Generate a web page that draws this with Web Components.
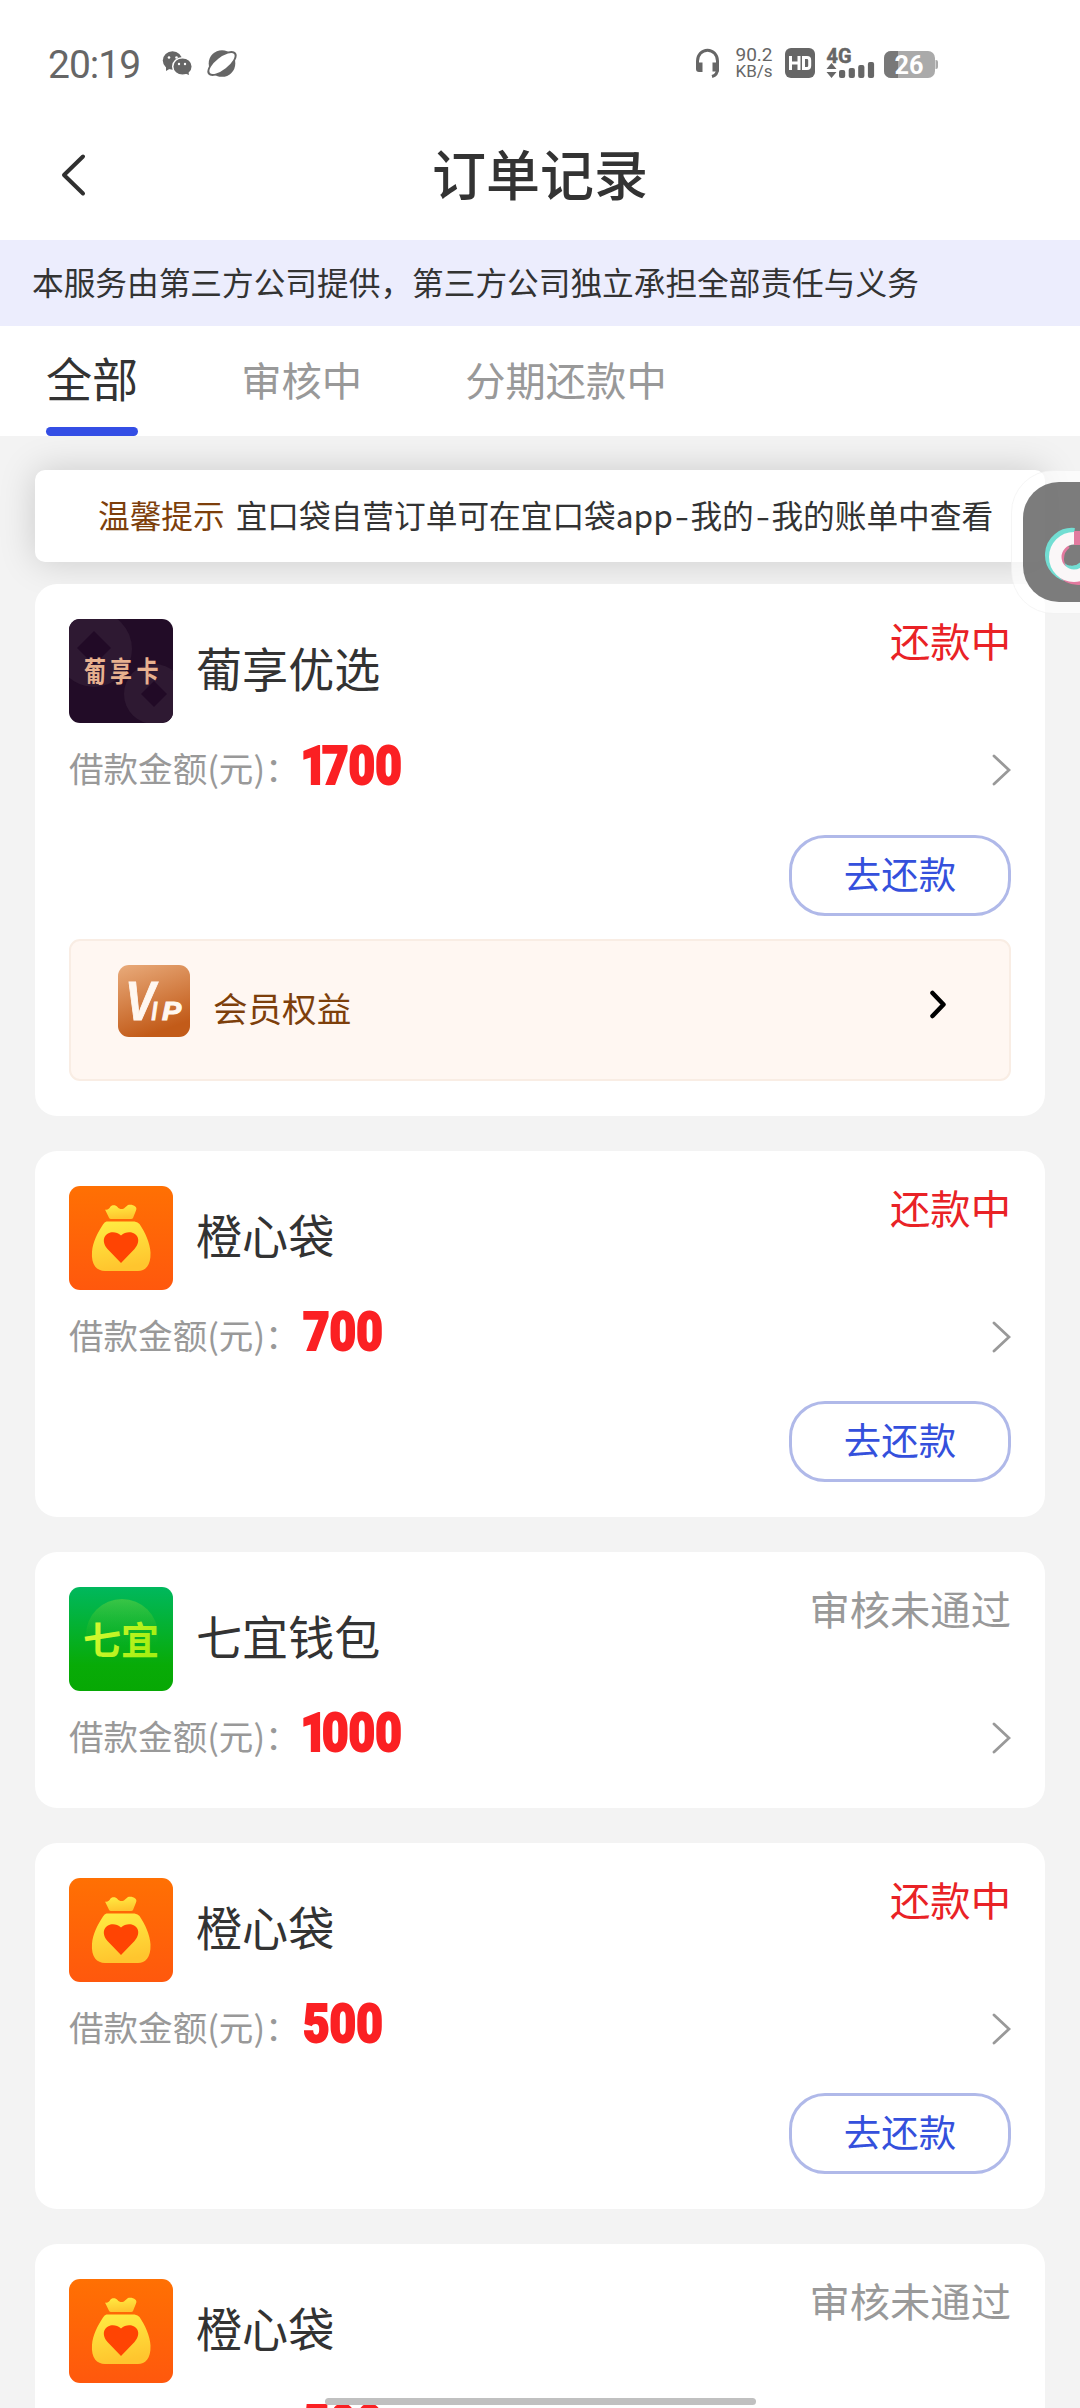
<!DOCTYPE html>
<html lang="zh-CN">
<head>
<meta charset="utf-8">
<title>订单记录</title>
<style>
html,body{margin:0;padding:0}
body{width:1080px;height:2408px;overflow:hidden;background:#f3f3f3;color:#333;font-family:"Noto Sans CJK SC",sans-serif}
</style>
</head>
<body>
<order-page></order-page>
<script>
const define = (name, html) => customElements.define(name, class extends HTMLElement {
  connectedCallback() {
    if (this.shadowRoot) return;
    const root = this.attachShadow({ mode: 'open' });
    root.innerHTML = typeof html === 'function' ? html(this) : html;
  }
});

define('status-bar', `
<style>
:host{display:flex;height:110px;box-sizing:border-box;padding:35px 142px 0 48px;align-items:flex-start;color:#666;background:#fff;font-family:Roboto,sans-serif}
.time{font-size:39px;line-height:61px;letter-spacing:-1px;width:114px;white-space:nowrap}
svg{display:block;flex:none}
.grow{flex:1}
.net{width:50px;margin-left:8px;padding-top:11px;text-align:center;font-size:19px;line-height:17px;white-space:nowrap}
.net div:last-child{font-size:17px}
</style>
<div class="time">20:19</div>
<svg width="30" height="60" viewBox="162 35 30 60"><ellipse cx="172.500" cy="60.500" rx="9.700" ry="9.300" fill="#666"/><path d="M166 66l0 5 5-3z" fill="#666"/><ellipse cx="182.500" cy="66.500" rx="9.800" ry="8.800" fill="#666" stroke="#fff" stroke-width="1.500"/><path d="M184 73l5 2-1-5z" fill="#666"/><g fill="#fff"><circle cx="169" cy="57.500" r="1.300"/><circle cx="176.500" cy="57.500" r="1.300"/><circle cx="179" cy="64" r="1.200"/><circle cx="185" cy="64" r="1.200"/></g></svg>
<svg style="margin-left:14px" width="32" height="60" viewBox="206 35 32 60"><circle cx="222" cy="63.500" r="13.300" fill="#666"/><ellipse cx="222" cy="63.500" rx="17.500" ry="8" fill="#666" transform="rotate(-38 222 63.500)"/><ellipse cx="222" cy="63.500" rx="15.300" ry="6" fill="#fff" transform="rotate(-38 222 63.500)"/></svg>
<div class="grow"></div>
<svg width="27" height="60" viewBox="695 35 27 60"><path d="M698.500 69v-8a9.700 10.500 0 0 1 20 0v8q0 6-5.500 7.500" fill="none" stroke="#666" stroke-width="3"/><path d="M697 62.500h6.500v9.500h-3.500q-3 0-3-3zM713.500 62.500h6.500v9h-6.500z" fill="#666"/></svg>
<div class="net"><div>90.2</div><div>KB/s</div></div>
<svg style="margin-left:5px" width="154" height="60" viewBox="785 35 154 60">
<rect x="786" y="48" width="30" height="30" rx="6" fill="#666"/><path d="M791.500 56v14M800 56v14M791.500 63h8.500M804.500 57.500h3.500q2.700 0 2.700 2.700v5.600q0 2.700-2.700 2.700h-3.500z" fill="none" stroke="#fff" stroke-width="3"/>
<text x="827.500" y="62.500" font-size="19.500" font-weight="700" fill="#666" stroke="#666" stroke-width=".5" textLength="25" lengthAdjust="spacingAndGlyphs">4G</text>
<path d="M832.500 63l5 6h-10zM832.500 78l5-6h-10z" fill="#666"/>
<g fill="#666"><rect x="840" y="70" width="6.200" height="8" rx="2"/><rect x="849.700" y="68" width="6.200" height="10" rx="2"/><rect x="859.200" y="65" width="6.200" height="13" rx="2"/><rect x="868.900" y="62" width="6.200" height="16" rx="2"/></g>
<rect x="885" y="51" width="51" height="27" rx="7" fill="#aaa"/><path d="M899 51h-7a7 7 0 0 0-7 7v13a7 7 0 0 0 7 7h7z" fill="#787878"/><path d="M936.500 60h.5q2 0 2 2v5q0 2-2 2h-.5z" fill="#aaa"/>
<text x="895.500" y="74" font-size="25.500" font-weight="700" fill="#fff" textLength="29" lengthAdjust="spacingAndGlyphs">26</text></svg>`);

define('title-bar', `
<style>
:host{display:grid;grid-template-columns:100px 1fr 100px;align-items:center;height:130px;background:#fff;color:#333}
h1{margin:0;text-align:center;font-size:54px;font-weight:500;line-height:70px;padding-bottom:5px}
svg{display:block;margin:0 0 0 60px;}
</style>
<svg width="28" height="44" viewBox="60 153 28 44"><path d="M83 156.500L64 175l19 18.500" fill="none" stroke="#303030" stroke-width="4" stroke-linecap="round" stroke-linejoin="round"/></svg>
<h1><slot></slot></h1>`);

define('notice-strip', `
<style>:host{display:flex;align-items:center;height:86px;box-sizing:border-box;padding:0 32px 5px;background:#ecedfd;font-size:31.68px;line-height:46px;white-space:nowrap}</style><slot></slot>`);

define('tab-bar', `
<style>:host{display:flex;position:relative;z-index:2;height:110px;background:#fff;padding-left:46px;gap:103px}</style><slot></slot>`);

define('tab-item', `
<style>
:host{display:flex;flex-direction:column;justify-content:flex-end;font-size:40.32px;color:#999;white-space:nowrap}
:host([active]){font-size:46.08px;color:#333}
span{line-height:60px;padding-bottom:27px}
:host([active]) span{padding-bottom:20px}
i{display:none;height:9px;border-radius:4.5px;background:#344ee5}
:host([active]) i{display:block}
</style><span><slot></slot></span><i></i>`);

define('tip-card', `
<style>
:host{display:flex;align-items:center;height:92px;box-sizing:border-box;margin:34px 35px 22px;padding:0 0 5px 63px;background:#fff;border-radius:10px;box-shadow:0 0 36px rgba(0,0,0,.17);font-size:31.68px;white-space:nowrap}
b{font-weight:400;color:#7d3f0b;margin-right:11px}
.h{display:inline-block;width:17.6px;text-align:center;transform:scaleX(1.3)}
</style><b>温馨提示</b><span>宜口袋自营订单可在宜口袋app<span class="h">-</span>我的<span class="h">-</span>我的账单中查看</span>`);

const logos = {
  grape: `<defs><clipPath id="c"><rect width="104" height="104" rx="11"/></clipPath></defs><g clip-path="url(#c)"><rect width="104" height="104" fill="#220c27"/><circle cx="25" cy="30" r="38" fill="#2e1932"/><path d="M25 12l17 17-17 17L8 29z" fill="#210a26"/><circle cx="85" cy="75" r="30" fill="#2e1932"/><path d="M85 62l13 13-13 13-13-13z" fill="#210a26"/></g><g fill="#e8b18f" font-weight="700" font-family="Noto Sans CJK SC" font-size="22" transform="translate(0 63) scale(1 1.28)"><text x="15" y="0">葡</text><text x="41" y="0">享</text><text x="67.500" y="0">卡</text></g>`,
  bag: `<defs><linearGradient id="o" x2="0" y2="1"><stop stop-color="#ff7003"/><stop offset="1" stop-color="#ff580d"/></linearGradient><linearGradient id="y" x2="0.200" y2="1"><stop stop-color="#ffed43"/><stop offset="1" stop-color="#ffc52e"/></linearGradient></defs><rect width="104" height="104" rx="11" fill="url(#o)"/><path d="M36 23.500c2.500.8 4.500-1 5.500-3 2-2 5.500-1.500 7 .5 2 2.500 5.500 2.700 7.500.5l3-2.500c5-1 10 2 8 5.500L64 32q-.5 1-2 1H42q-1.500 0-2-1.200z" fill="url(#y)"/><path d="M37.500 35.500h28q3.500.5 5 2.500C76 46 81 57 81.500 66.500 82 80 76 85 69 85H36C28 85 22 79 23 66c.7-10 5.500-19 11-27.500q1.500-2.500 3.500-3z" fill="url(#y)"/><path d="M52 77L38.500 63C28 50 43 41 52 49.500 61 41 76.500 50 65.500 63z" fill="#ff4403"/>`,
  green: `<defs><linearGradient id="g" x2="0" y2="1"><stop stop-color="#00b85d"/><stop offset=".75" stop-color="#08ab07"/><stop offset="1" stop-color="#07a804"/></linearGradient><linearGradient id="d" x2="0" y2="1"><stop stop-color="#8edc38" stop-opacity=".4"/><stop offset=".65" stop-color="#40c020" stop-opacity="0"/></linearGradient><linearGradient id="t" x2="1" y2=".4"><stop stop-color="#e1fb39"/><stop offset="1" stop-color="#a5ef12"/></linearGradient></defs><rect width="104" height="104" rx="11" fill="url(#g)"/><circle cx="53" cy="48" r="36" fill="url(#d)"/><text x="14" y="67" font-family="Noto Sans CJK SC" font-weight="700" font-size="38" fill="url(#t)">七宜</text>`
};

define('brand-logo', el => `<style>:host,svg{display:block;flex:none}</style><svg width="104" height="104" viewBox="0 0 104 104">${logos[el.getAttribute('kind')]}</svg>`);

define('pill-button', `
<style>:host{display:flex;align-items:center;justify-content:center;align-self:flex-end;box-sizing:border-box;width:222px;height:81px;padding-bottom:5px;margin-top:29.600px;border:3px solid #b0b9e9;border-radius:36px;color:#3450dc;font-size:37.440px;line-height:50px}</style><slot></slot>`);

define('benefit-row', `
<style>
:host{display:flex;box-sizing:border-box;height:142px;margin-top:23.300px;padding:24px 61px 0 47px;border:2px solid #f9ede4;border-radius:11px;background:#fff7f2;color:#7d3f0b}
span{flex:1;font-size:34.560px;line-height:50px;padding:17px 0 0 23px}
svg{display:block;flex:none}.a{margin-top:25px}
</style>
<svg width="72" height="72" viewBox="0 0 72 72"><defs><linearGradient id="v" x2=".35" y2="1"><stop stop-color="#e9ab7b"/><stop offset="1" stop-color="#c25b19"/></linearGradient></defs><rect width="72" height="72" rx="11" fill="url(#v)"/><g transform="scale(.8 1)"><text fill="#fff7f0" font-family="Liberation Sans" font-weight="700" font-style="italic" stroke="#fff7f0" stroke-width="1"><tspan x="9" y="55" font-size="56">V</tspan><tspan x="42" y="55" font-size="25">I</tspan><tspan x="55" y="55" font-size="25" textLength="24" lengthAdjust="spacingAndGlyphs">P</tspan></text></g></svg>
<span><slot></slot></span>
<svg class="a" width="20" height="30" viewBox="929 990 20 30"><path d="M933.500 993l11 11.500-11 11.500" fill="none" stroke="#000" stroke-width="4.500" stroke-linecap="round" stroke-linejoin="round"/></svg>`);

define('order-card', el => {
  const a = n => el.getAttribute(n), amt = a('amount');
  const digits = amt[0] === '1' ? `<span class="one">1</span>${amt.slice(1)}` : amt;
  return `
<style>
:host{display:flex;flex-direction:column;position:relative;background:#fff;border-radius:22px;padding:35px 34px}
.head{display:flex;height:104px}
.name{flex:1;padding:16px 0 0 23px;font-size:46.080px;line-height:64px;white-space:nowrap}
.state{font-size:40.320px;line-height:42px;color:${a('state') === '还款中' ? '#e92226' : '#999'}}
.row{display:flex;height:82px;align-items:center}
.label{font-size:34.560px;line-height:50px;color:#999;width:234px;padding-top:6px;white-space:nowrap}
.sum{flex:1;font:900 54px/60px Roboto,sans-serif;color:#fb2023;padding-top:3px}
.sum div{transform:scaleX(.85);transform-origin:0 50%;white-space:nowrap;-webkit-text-stroke:2px #fb2023}
.one{letter-spacing:-6px;margin-left:-3px}
svg{display:block;margin-top:12px}
</style>
<div class="head"><brand-logo kind="${a('logo')}"></brand-logo><div class="name">${a('name')}</div><div class="state">${a('state')}</div></div>
<div class="row"><div class="label">借款金额(元)：</div><div class="sum"><div>${digits}</div></div>
<svg width="20" height="32" viewBox="0 0 20 32"><path d="M3 2l15 14L3 30" fill="none" stroke="#999" stroke-width="2.800" stroke-linecap="round"/></svg></div>
<slot></slot>`;
});

define('order-list', `<style>:host{display:flex;flex-direction:column;gap:34.700px;margin:0 35px}</style><slot></slot>`);

/* Floating shortcut docked on the right edge */
define('float-widget', `
<style>:host{position:absolute;z-index:5;left:1011px;top:470px;width:69px;height:144px;overflow:hidden}svg{display:block}</style>
<svg width="69" height="144" viewBox="1011 470 69 144"><rect x="1011.500" y="470.500" width="150" height="143" rx="42" fill="#fff" fill-opacity=".68" stroke="#eee" stroke-opacity=".6"/><rect x="1023" y="482" width="130" height="120" rx="36" fill="#686868" fill-opacity=".87"/>
<g fill="none"><path d="M1074 536A19 19 0 1 0 1091 555" stroke="#72ded3" stroke-width="16"/><path d="M1066 543A20 20 0 1 0 1098 559" stroke="#e27a9f" stroke-width="12"/><path d="M1070 567.500q7 1 12-3" stroke="#72ded3" stroke-width="4"/><path d="M1074 538.250a18.750 18.750 0 1 0 18.750 18.750" stroke="#faf7f8" stroke-width="12.500"/></g><path d="M1074 531h6v14h-6z" fill="#e27a9f"/></svg>`);

define('home-indicator', `<style>:host{position:absolute;z-index:6;left:325px;top:2398px;width:431px;height:7px;border-radius:4px;background:#c0c0c0}</style>`);

define('order-page', `
<style>:host{display:block;position:relative;width:1080px;height:2408px;overflow:hidden;background:#f3f3f3}</style>
<status-bar></status-bar>
<title-bar>订单记录</title-bar>
<notice-strip>本服务由第三方公司提供，第三方公司独立承担全部责任与义务</notice-strip>
<tab-bar><tab-item active>全部</tab-item><tab-item>审核中</tab-item><tab-item>分期还款中</tab-item></tab-bar>
<tip-card></tip-card>
<order-list>
<order-card logo="grape" name="葡享优选" state="还款中" amount="1700"><pill-button>去还款</pill-button><benefit-row>会员权益</benefit-row></order-card>
<order-card logo="bag" name="橙心袋" state="还款中" amount="700"><pill-button>去还款</pill-button></order-card>
<order-card logo="green" name="七宜钱包" state="审核未通过" amount="1000"></order-card>
<order-card logo="bag" name="橙心袋" state="还款中" amount="500"><pill-button>去还款</pill-button></order-card>
<order-card logo="bag" name="橙心袋" state="审核未通过" amount="500"></order-card>
</order-list>
<float-widget></float-widget>
<home-indicator></home-indicator>`);
</script>
</body>
</html>
